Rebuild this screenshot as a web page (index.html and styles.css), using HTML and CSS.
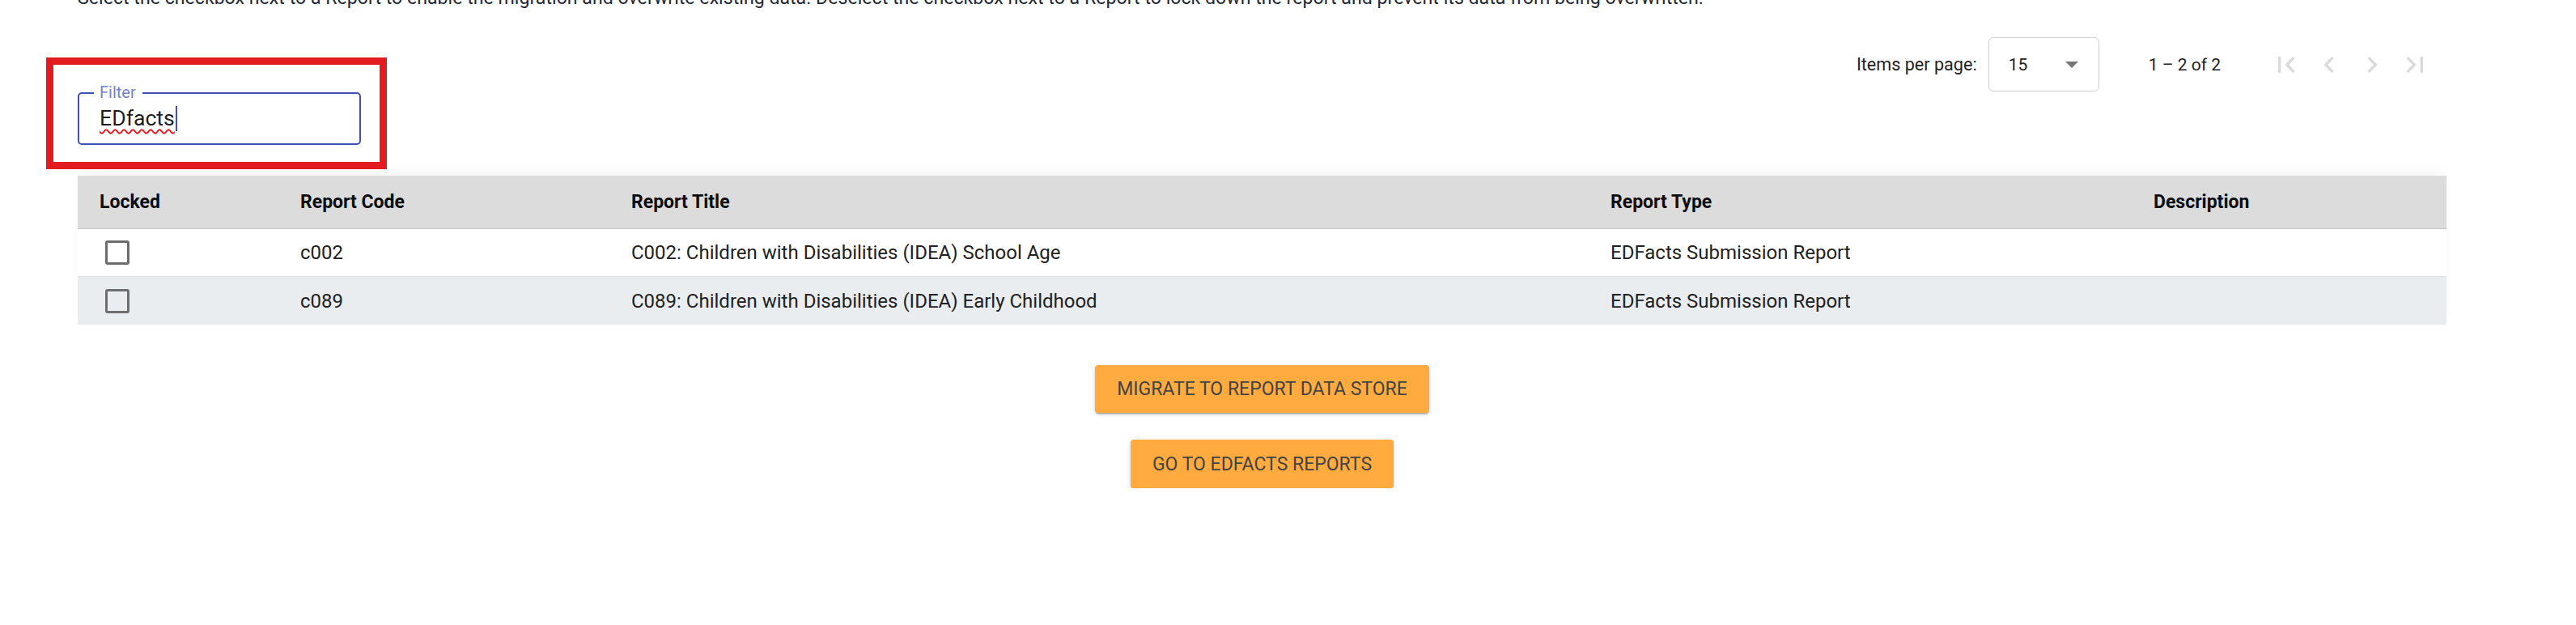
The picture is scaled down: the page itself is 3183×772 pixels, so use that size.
FILE: index.html
```html
<!DOCTYPE html>
<html lang="en">
<head>
<meta charset="utf-8">
<title>Report Migration</title>
<link rel="stylesheet" href="styles.css">
</head>
<body>
<main class="page">
  <p class="intro">Select the checkbox next to a Report to enable the migration and overwrite existing data. Deselect the checkbox next to a Report to lock down the report and prevent its data from being overwritten.</p>

  <div class="toolbar">
    <div class="filter">
      <div class="field">
        <span class="field-label">Filter</span>
        <span class="field-value"><span class="misspelled">EDfacts</span><span class="caret"></span></span>
      </div>
      <div class="highlight"></div>
    </div>

    <div class="paginator">
      <span class="pg-label">Items per page:</span>
      <div class="pg-select">
        <span class="pg-value">15</span>
        <span class="pg-arrow"></span>
      </div>
      <span class="pg-range">1 – 2 of 2</span>
      <div class="pg-nav">
        <span class="pg-btn"><svg viewBox="0 0 24 24" width="40" height="40"><path d="M18.41 16.59L13.82 12l4.59-4.59L17 6l-6 6 6 6zM6 6h2v12H6z"/></svg></span>
        <span class="pg-btn"><svg viewBox="0 0 24 24" width="40" height="40"><path d="M15.41 7.41L14 6l-6 6 6 6 1.41-1.41L10.83 12z"/></svg></span>
        <span class="pg-btn"><svg viewBox="0 0 24 24" width="40" height="40"><path d="M10 6L8.59 7.41 13.17 12l-4.58 4.59L10 18l6-6z"/></svg></span>
        <span class="pg-btn"><svg viewBox="0 0 24 24" width="40" height="40"><path d="M5.59 7.41L10.18 12l-4.59 4.59L7 18l6-6-6-6zM16 6h2v12h-2z"/></svg></span>
      </div>
    </div>
  </div>

  <div class="table">
    <div class="row head">
      <div class="cell">Locked</div>
      <div class="cell">Report Code</div>
      <div class="cell">Report Title</div>
      <div class="cell">Report Type</div>
      <div class="cell">Description</div>
    </div>
    <div class="row">
      <div class="cell"><span class="checkbox"></span></div>
      <div class="cell">c002</div>
      <div class="cell">C002: Children with Disabilities (IDEA) School Age</div>
      <div class="cell">EDFacts Submission Report</div>
      <div class="cell"></div>
    </div>
    <div class="row alt">
      <div class="cell"><span class="checkbox"></span></div>
      <div class="cell">c089</div>
      <div class="cell">C089: Children with Disabilities (IDEA) Early Childhood</div>
      <div class="cell">EDFacts Submission Report</div>
      <div class="cell"></div>
    </div>
  </div>

  <div class="actions">
    <button class="btn btn-migrate" type="button">MIGRATE TO REPORT DATA STORE</button>
    <button class="btn btn-go" type="button">GO TO EDFACTS REPORTS</button>
  </div>
</main>
</body>
</html>
```

FILE: styles.css
```css
* { box-sizing: border-box; }

html, body {
  margin: 0;
  padding: 0;
  background: #ffffff;
  overflow: hidden;
}

body {
  font-family: "Roboto", "Liberation Sans", Arial, sans-serif;
  color: #212121;
}

.page {
  width: 2927px;
  margin-left: 96px;
}

.intro {
  margin: -15px 0 0 0;
  height: 27px;
  font-size: 23.15px;
  line-height: 26px;
  color: #1f2a36;
  white-space: nowrap;
}

/* toolbar: filter + paginator */
.toolbar {
  margin-top: 34px;
  display: flex;
  justify-content: space-between;
  align-items: flex-start;
}

.filter {
  position: relative;
  margin-top: 68px;
}

.field {
  position: relative;
  width: 350px;
  height: 65px;
  border: 2px solid #3f51b5;
  border-radius: 5px;
  padding: 14px 0 0 25px;
}

.field-label {
  position: absolute;
  left: 18px;
  top: -12px;
  padding: 0 8px 0 7px;
  background: #ffffff;
  font-size: 20px;
  line-height: 20px;
  color: #7483cc;
}

.field-value {
  font-size: 26.67px;
  line-height: 32px;
  color: #1e1e1e;
  white-space: nowrap;
}

.misspelled {
  text-decoration: underline wavy #e8141a;
  text-decoration-thickness: 1.5px;
  text-underline-offset: 4px;
  text-decoration-skip-ink: none;
}

.caret {
  display: inline-block;
  width: 2px;
  height: 31px;
  background: #3f51b5;
  vertical-align: -7px;
  margin-left: 1px;
}

.highlight {
  position: absolute;
  left: -39px;
  top: -43px;
  width: 421px;
  height: 138px;
  border: 9px solid #e31c20;
  pointer-events: none;
}

.paginator {
  display: flex;
  align-items: center;
  height: 67px;
  padding-right: 13px;
  font-size: 21px;
  color: #222222;
}

.pg-label {
  font-size: 21.6px;
  margin-right: 14px;
}

.pg-select {
  width: 137px;
  height: 67px;
  border: 1px solid #cfcfcf;
  border-radius: 6px;
  display: flex;
  align-items: center;
  padding-left: 24px;
  padding-right: 25px;
}

.pg-value { flex: 1; }

.pg-arrow {
  width: 0;
  height: 0;
  border-left: 8px solid transparent;
  border-right: 8px solid transparent;
  border-top: 8px solid #757575;
}

.pg-range { margin-left: 61px; }

.pg-nav {
  display: flex;
  margin-left: 54px;
}

.pg-btn {
  width: 53px;
  height: 53px;
  display: flex;
  align-items: center;
  justify-content: center;
}

.pg-btn svg { fill: #dadada; display: block; }

/* table */
.table {
  margin-top: 38px;
  box-shadow: 0 -6px 16px -4px rgba(0, 0, 0, 0.06);
}

.row {
  display: grid;
  grid-template-columns: 275px 409px 1210px 671px 1fr;
  align-items: center;
  height: 59px;
  background: #ffffff;
  border-bottom: 1px solid #dfe2e5;
  font-size: 24px;
  color: #212121;
}

.row .cell:first-child { padding-left: 27px; }

.row.head {
  height: 66px;
  background: #dcdcdc;
  border-bottom: 1px solid #c4c4c4;
  font-size: 23px;
  font-weight: 700;
  color: #0c0c0c;
}

.row.alt {
  background: #eaedf0;
  border-bottom: none;
}

.checkbox {
  display: block;
  width: 30px;
  height: 30px;
  margin-left: 7px;
  border: 3px solid #6d6d6d;
  border-radius: 3px;
}

/* actions */
.actions {
  margin-top: 50px;
  display: flex;
  flex-direction: column;
  align-items: center;
  gap: 33px;
}

.btn {
  font-family: "Roboto", "Liberation Sans", Arial, sans-serif;
  font-size: 23px;
  font-weight: 400;
  color: #434343;
  background: #ffab40;
  border: none;
  border-radius: 4px;
  padding: 0 27px;
  box-shadow: 0 3px 2px -2px rgba(0, 0, 0, 0.25), 0 2px 3px 0 rgba(0, 0, 0, 0.14), 0 1px 7px 0 rgba(0, 0, 0, 0.1);
}

.btn-migrate { height: 59px; }
.btn-go { height: 60px; }
```
